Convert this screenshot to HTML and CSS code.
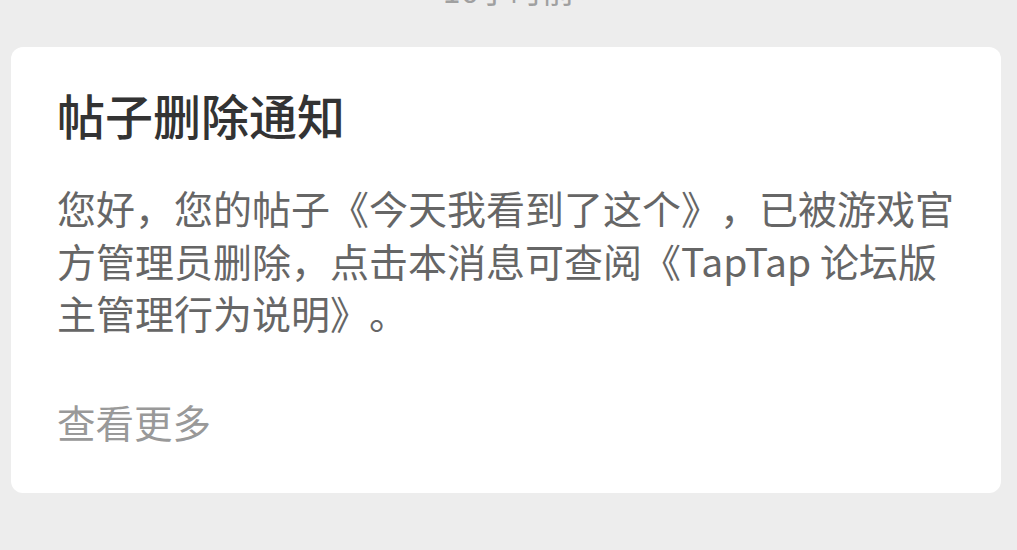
FILE: index.html
```html
<!DOCTYPE html>
<html lang="zh-CN">
<head>
<meta charset="utf-8">
<link rel="stylesheet" href="styles.css">
</head>
<body>
<div class="time">16小时前</div>
<div class="card">
  <h1 class="title">帖子删除通知</h1>
  <p class="content">您好，您的帖子《今天我看到了这个》，已被游戏官方管理员删除，点击本消息可查阅《TapTap 论坛版主管理行为说明》。</p>
  <div class="more">查看更多</div>
</div>
</body>
</html>
```
FILE: styles.css
```css
html, body {
  margin: 0;
  padding: 0;
  background: #ededed;
  font-family: "Noto Sans CJK SC", "Noto Sans", sans-serif;
  text-spacing-trim: space-all;
}
.time {
  margin-top: -28px;
  height: 34px;
  line-height: 34px;
  font-size: 32px;
  color: #a0a0a0;
  text-align: center;
}
.card {
  margin: 41px 16px 0 11px;
  background: #fff;
  border-radius: 12px;
  padding: 35px 46px 40px 46px;
  height: 446px;
  box-sizing: border-box;
}
.title {
  margin: 0;
  font-size: 48px;
  line-height: 64px;
  font-weight: 500;
  color: #333;
}
.content {
  margin: 35px 0 0;
  font-size: 39px;
  line-height: 52.5px;
  font-weight: 400;
  color: #666;
}
.more {
  margin-top: 56px;
  font-size: 38.5px;
  line-height: 53px;
  color: #999;
}
```
